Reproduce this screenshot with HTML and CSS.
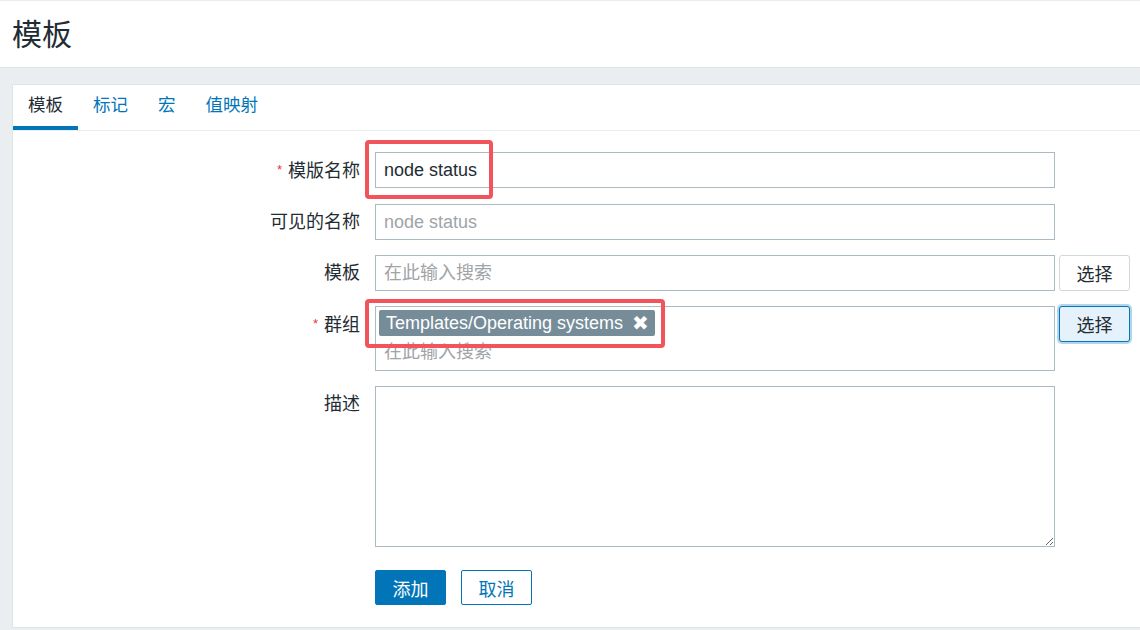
FILE: index.html
```html
<!DOCTYPE html>
<html lang="zh-CN">

<head>
    <meta charset="UTF-8">
    <meta name="viewport" content="width=device-width, initial-scale=1.0">
    <title>模板</title>
    <link rel="stylesheet" href="styles.css">
</head>

<body>
    <header class="page-header">
        <h1>模板</h1>
    </header>

    <main class="card">
        <ul class="tabs">
            <li class="tab active">模板</li>
            <li class="tab">标记</li>
            <li class="tab">宏</li>
            <li class="tab">值映射</li>
        </ul>

        <form class="form">
            <div class="form-row">
                <label class="label"><span class="req">*</span>模版名称</label>
                <div class="field">
                    <input class="input" type="text" value="node status">
                    <span class="mark mark-name"></span>
                </div>
            </div>

            <div class="form-row">
                <label class="label">可见的名称</label>
                <div class="field">
                    <input class="input" type="text" placeholder="node status">
                </div>
            </div>

            <div class="form-row">
                <label class="label">模板</label>
                <div class="field">
                    <input class="input" type="text" placeholder="在此输入搜索">
                </div>
                <button type="button" class="btn-select">选择</button>
            </div>

            <div class="form-row">
                <label class="label"><span class="req">*</span>群组</label>
                <div class="field">
                    <div class="multiselect">
                        <span class="tag">Templates/Operating systems <span class="tag-remove">✖</span></span>
                        <input class="ms-input" type="text" placeholder="在此输入搜索">
                    </div>
                    <span class="mark mark-group"></span>
                </div>
                <button type="button" class="btn-select focused">选择</button>
            </div>

            <div class="form-row">
                <label class="label">描述</label>
                <div class="field">
                    <textarea class="textarea"></textarea>
                </div>
            </div>

            <div class="form-row actions">
                <span class="label"></span>
                <button type="button" class="btn-primary">添加</button>
                <button type="button" class="btn-cancel">取消</button>
            </div>
        </form>
    </main>
</body>

</html>
```

FILE: styles.css
```css
body {
    font-family: 'Liberation Sans', Arial, 'Noto Sans CJK SC', sans-serif;
    font-size: 18px;
    color: #1f2c33;
    background-color: #ebeef0;
    margin: 0;
    padding: 0;
    overflow: hidden;
}

.page-header {
    height: 68px;
    background-color: #fff;
    border-top: 1px solid #ebeef0;
    border-bottom: 1px solid #dfe4e7;
    box-sizing: border-box;
}

.page-header h1 {
    margin: 0;
    padding: 19px 0 0 12px;
    font-size: 30px;
    font-weight: normal;
    line-height: 1;
}

.card {
    display: block;
    margin: 16px 0 0 12px;
    background-color: #fff;
    border: 1px solid #dfe4e7;
    border-right: none;
    height: 544px;
    box-sizing: border-box;
}

.tabs {
    display: flex;
    list-style: none;
    margin: 0;
    padding: 0;
    font-size: 17.5px;
    border-bottom: 1px solid #ebeef0;
}

.tab {
    padding: 0 15px;
    line-height: 41px;
    border-bottom: 4px solid transparent;
    color: #0275b8;
}

.tab.active {
    color: #1f2c33;
    border-bottom-color: #0275b8;
}

.form {
    padding-top: 21px;
}

.form-row {
    display: flex;
    align-items: flex-start;
    margin-bottom: 15px;
}

.label {
    flex: 0 0 362px;
    box-sizing: border-box;
    padding-right: 15px;
    text-align: right;
    line-height: 36px;
}

.req {
    color: #e33734;
    font-size: 13px;
    vertical-align: 3px;
    margin-right: 6px;
}

.field {
    position: relative;
    width: 680px;
}

.input {
    display: block;
    width: 100%;
    height: 36px;
    box-sizing: border-box;
    border: 1px solid #acbbc2;
    border-radius: 0;
    padding: 0 8px;
    font-family: inherit;
    font-size: 18px;
    color: #1f2c33;
    outline: none;
}

.input::placeholder,
.ms-input::placeholder {
    color: #a0a4a7;
}

.multiselect {
    height: 65px;
    box-sizing: border-box;
    border: 1px solid #acbbc2;
    padding: 3px 3px 0 3px;
}

.tag {
    display: inline-block;
    height: 26px;
    line-height: 26px;
    padding: 0 6px 0 7px;
    background-color: #768d99;
    color: #fff;
    border-radius: 2px;
}

.tag-remove {
    margin-left: 4px;
    font-size: 20px;
    vertical-align: top;
}

.ms-input {
    display: block;
    width: 100%;
    box-sizing: border-box;
    border: none;
    padding: 0 5px;
    margin-top: 1px;
    height: 30px;
    font-family: inherit;
    font-size: 18px;
    outline: none;
}

.textarea {
    display: block;
    width: 680px;
    height: 161px;
    box-sizing: border-box;
    border: 1px solid #acbbc2;
    border-radius: 0;
    resize: both;
    outline: none;
    font-family: inherit;
    font-size: 18px;
}

.btn-select {
    margin-left: 4px;
    width: 71px;
    height: 36px;
    background-color: #fff;
    border: 1px solid #cfd8dc;
    border-radius: 3px;
    font-family: inherit;
    font-size: 18px;
    color: #1f2c33;
    padding: 0;
}

.btn-select.focused {
    background-color: #e5f1fb;
    border-color: #0275b8;
    box-shadow: 0 0 0 2px rgba(2, 117, 184, 0.3);
}

.actions {
    margin-top: 23px;
}

.btn-primary,
.btn-cancel {
    width: 71px;
    height: 35px;
    border-radius: 2px;
    font-family: inherit;
    font-size: 18px;
    padding: 0;
}

.btn-primary {
    background-color: #0275b8;
    border: 1px solid #0275b8;
    color: #fff;
}

.btn-cancel {
    margin-left: 15px;
    background-color: #fff;
    border: 1px solid #0275b8;
    color: #0275b8;
}

/* red outline callouts over the edited fields */
.mark {
    position: absolute;
    border: 4px solid #f2545b;
    border-radius: 4px;
    box-sizing: border-box;
    pointer-events: none;
}

.mark-name {
    left: -10px;
    top: -12px;
    width: 128px;
    height: 59px;
}

.mark-group {
    left: -10px;
    top: -7px;
    width: 300px;
    height: 49px;
}
```
